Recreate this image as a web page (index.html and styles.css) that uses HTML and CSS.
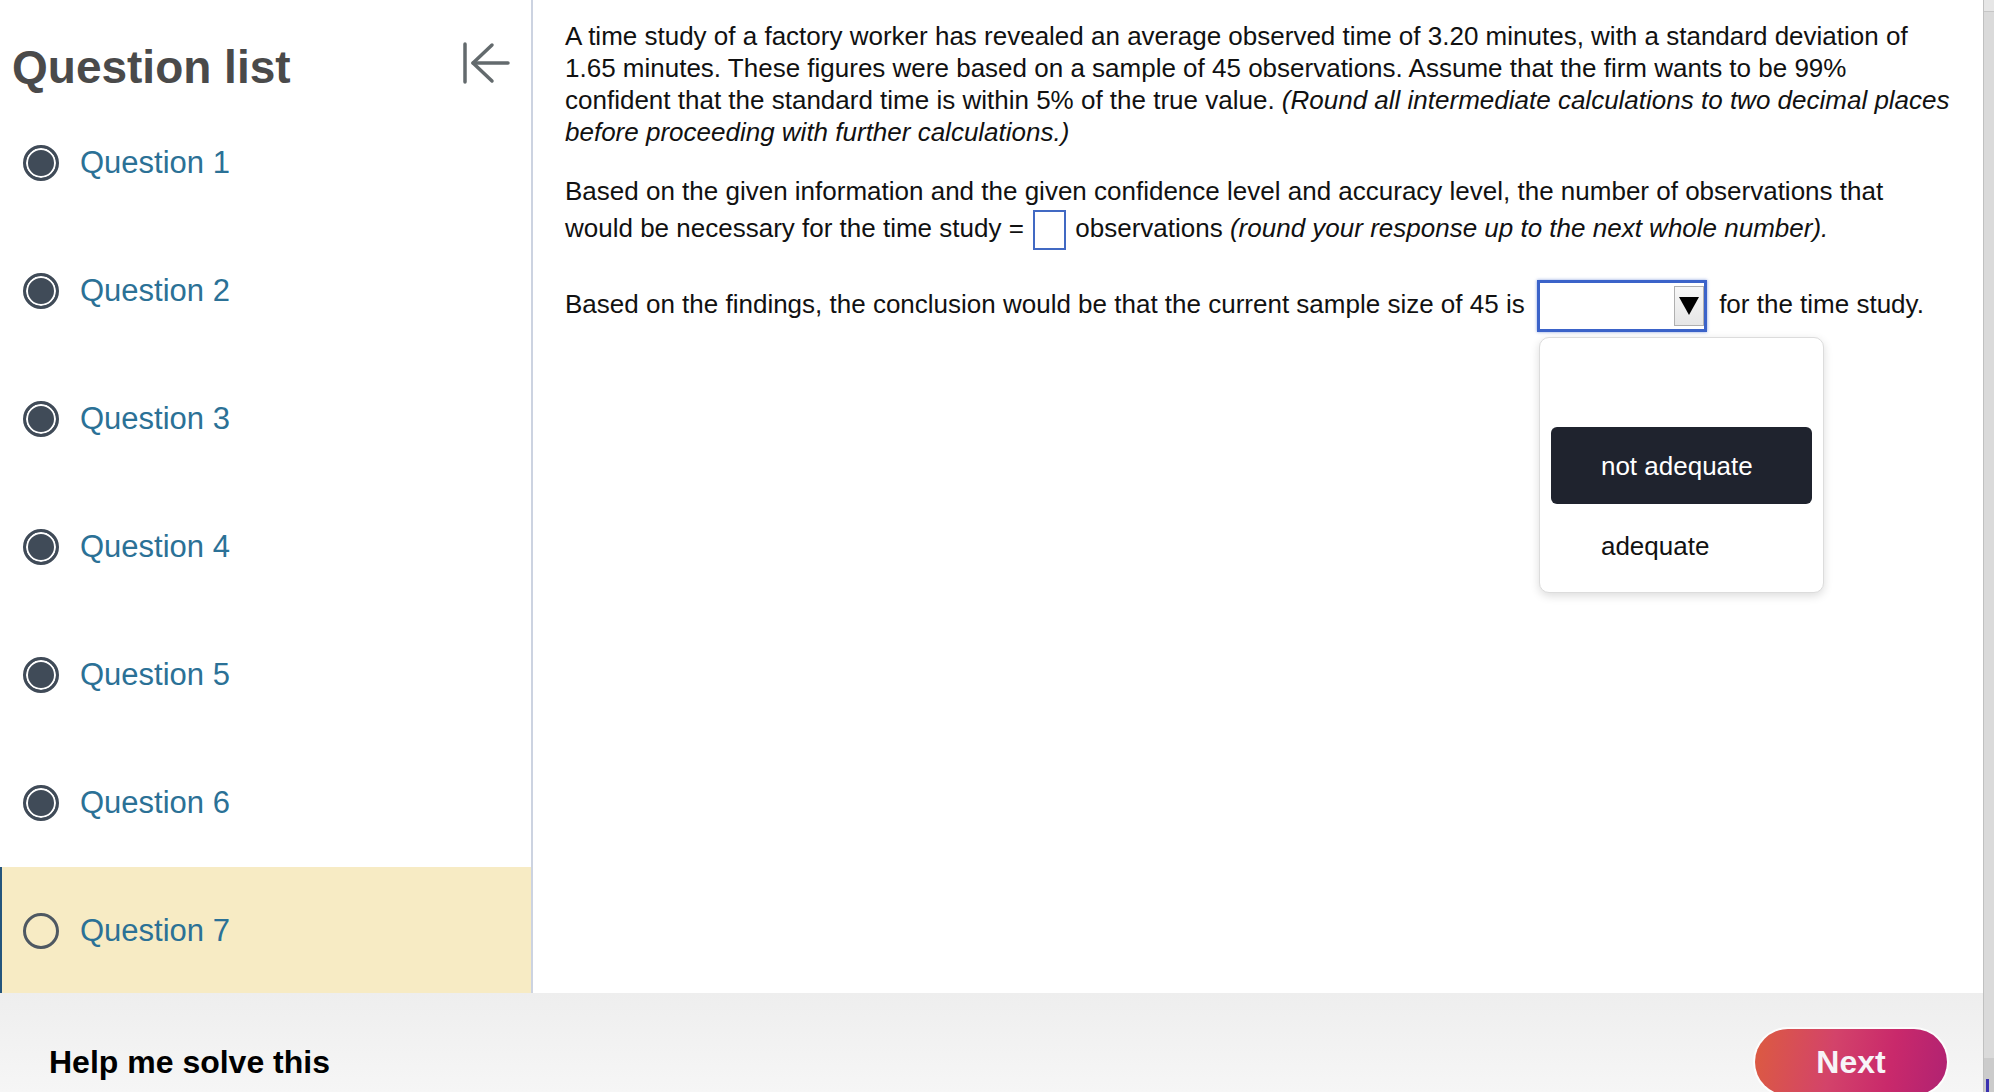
FILE: index.html
```html
<!DOCTYPE html>
<html lang="en">
<head>
<meta charset="UTF-8">
<meta name="viewport" content="width=device-width, initial-scale=1.0">
<link rel="stylesheet" href="styles.css">
<title>Question 7</title>
</head>
<body>
  <div class="page">
    <div class="app">
      <div class="workspace">
        <aside class="sidebar">
          <div class="sidebar-head">
            <h2 class="sidebar-title">Question list</h2>
            <button class="collapse-btn" aria-label="Collapse question list">
              <svg width="48" height="42" viewBox="0 0 48 42" fill="none" stroke="#636a6d" stroke-width="3.5" stroke-linecap="round" stroke-linejoin="round">
                <path d="M3 2v38"/>
                <path d="M30 3 11 21l19 18"/>
                <path d="M11 21h35"/>
              </svg>
            </button>
          </div>
          <ul class="question-list">
            <li class="question-item done"><span class="radio"></span>Question 1</li>
            <li class="question-item done"><span class="radio"></span>Question 2</li>
            <li class="question-item done"><span class="radio"></span>Question 3</li>
            <li class="question-item done"><span class="radio"></span>Question 4</li>
            <li class="question-item done"><span class="radio"></span>Question 5</li>
            <li class="question-item done"><span class="radio"></span>Question 6</li>
            <li class="question-item current"><span class="radio"></span>Question 7</li>
          </ul>
        </aside>

        <main class="question-body">
          <p>A time study of a factory worker has revealed an average observed time of 3.20 minutes, with a standard deviation of 1.65 minutes. These figures were based on a sample of 45 observations. Assume that the firm wants to be 99% confident that the standard time is within 5% of the true value. <em>(Round all intermediate calculations to two decimal places before proceeding with further calculations.)</em></p>
          <p>Based on the given information and the given confidence level and accuracy level, the number of observations that would be necessary for the time study = <input class="answer-box" type="text" aria-label="observations"> observations <em>(round your response up to the next whole number).</em></p>
          <p>Based on the findings, the conclusion would be that the current sample size of 45 is <span class="select-wrap"><span class="fake-select"><span class="select-arrow"><svg width="20" height="20" viewBox="0 0 20 20"><path d="M0 1h20L10 19z" fill="#000"/></svg></span></span><span class="select-menu" role="listbox"><span class="select-option"></span><span class="select-option active">not adequate</span><span class="select-option">adequate</span></span></span> for the time study.</p>
        </main>
      </div>

      <footer class="footer">
        <span class="help-link">Help me solve this</span>
        <button class="next-btn">Next</button>
      </footer>
    </div>

    <div class="scroll-gutter">
      <div class="gutter-top"></div>
      <div class="gutter-track"></div>
      <div class="gutter-bottom"><span class="gutter-mark"></span></div>
    </div>
  </div>
</body>
</html>
```

FILE: styles.css
```css
/* page frame */
* {
  margin: 0;
  padding: 0;
  box-sizing: border-box;
}
html,
body {
  height: 100%;
}
body {
  font-family: "Liberation Sans", Arial, sans-serif;
  background-color: #ffffff;
  overflow: hidden;
}
.page {
  display: flex;
  height: 100vh;
}
.app {
  flex: 1;
  min-width: 0;
  display: flex;
  flex-direction: column;
}
.workspace {
  flex: 1;
  min-height: 0;
  display: flex;
  overflow: hidden;
}

/* question list */
.sidebar {
  width: 533px;
  flex: none;
  border-right: 2px solid #ccd3e1;
  overflow: hidden;
}
.sidebar-head {
  height: 99px;
  display: flex;
  align-items: center;
  padding: 34px 21px 0 12px;
}
.sidebar-title {
  font-size: 46px;
  line-height: 52px;
  font-weight: bold;
  color: #4a4a4a;
}
.collapse-btn {
  display: block;
  margin-left: auto;
  margin-bottom: 7px;
  width: 48px;
  height: 42px;
  border: none;
  background: none;
}
.collapse-btn svg {
  display: block;
}
.question-list {
  list-style: none;
}
.question-item {
  height: 128px;
  display: flex;
  align-items: center;
  gap: 21px;
  padding-left: 23px;
  font-size: 31px;
  color: #2b7196;
}
.radio {
  width: 36px;
  height: 36px;
  flex: none;
  border-radius: 50%;
  border: 3px solid #404b58;
}
.question-item.done .radio {
  background-color: #404b58;
  box-shadow: inset 0 0 0 2px #ffffff;
}
.question-item.current {
  background-color: #f7ebc4;
  box-shadow: inset 2px 0 0 #24557d;
}
.question-item.current .radio {
  border-color: #4e5862;
}

/* question text */
.question-body {
  flex: 1;
  padding: 20px 29px 0 32px;
  font-size: 26px;
  line-height: 32px;
  color: #111111;
}
.question-body p {
  margin-bottom: 27px;
}
.answer-box {
  width: 33px;
  height: 40px;
  margin: 3px 2px;
  vertical-align: middle;
  border: 2px solid #4169c3;
  background-color: #ffffff;
  font: inherit;
}
.select-wrap {
  position: relative;
  display: inline-block;
  vertical-align: middle;
  margin: 0 5px;
}
.fake-select {
  width: 170px;
  height: 52px;
  display: flex;
  align-items: center;
  justify-content: flex-end;
  padding: 3px 0;
  border: 3px solid #3b63c9;
  background-color: #ffffff;
  box-shadow: 0 0 3px rgba(59, 99, 201, 0.6);
}
.select-arrow {
  width: 30px;
  height: 40px;
  display: flex;
  align-items: center;
  justify-content: center;
  border: 1px solid #b0b0b0;
  background: linear-gradient(#f7f7f7, #e6e6e6);
}
.select-arrow svg {
  display: block;
}

/* open dropdown */
.select-menu {
  position: absolute;
  top: calc(100% + 5px);
  left: 2px;
  width: 285px;
  display: flex;
  flex-direction: column;
  gap: 3px;
  padding: 9px 11px 8px;
  background-color: #ffffff;
  border: 1px solid #dcdcdc;
  border-radius: 10px;
  box-shadow: 0 3px 10px rgba(0, 0, 0, 0.14);
  z-index: 2;
}
.select-option {
  height: 77px;
  display: flex;
  align-items: center;
  padding-left: 50px;
  border-radius: 6px;
  font-size: 26px;
  color: #111111;
}
.select-option.active {
  background-color: #1f232e;
  color: #ffffff;
}

/* bottom bar */
.footer {
  height: 99px;
  flex: none;
  display: flex;
  align-items: flex-start;
  justify-content: space-between;
  padding: 36px 36px 0 49px;
  background: linear-gradient(#eeeeee, #f6f6f6);
  overflow: hidden;
}
.help-link {
  margin-top: 13px;
  font-size: 32px;
  line-height: 40px;
  font-weight: bold;
  color: #000000;
}
.next-btn {
  width: 192px;
  height: 66px;
  flex: none;
  border: none;
  border-radius: 33px;
  background: linear-gradient(100deg, #dc5b40 0%, #d3436a 40%, #c9296b 70%, #b02272 100%);
  box-shadow: 0 0 0 2px rgba(255, 255, 255, 0.8);
  color: #f7f4f8;
  font-family: "Liberation Sans", Arial, sans-serif;
  font-size: 32px;
  font-weight: bold;
}

/* window scrollbar */
.scroll-gutter {
  width: 11px;
  flex: none;
  display: flex;
  flex-direction: column;
  border-left: 1px solid #c0c0c0;
  background-color: #dadada;
}
.gutter-top {
  height: 12px;
  background-color: #e6e6e6;
  border-bottom: 1px solid #c6c6c6;
}
.gutter-track {
  flex: 1;
}
.gutter-bottom {
  height: 34px;
  display: flex;
  align-items: flex-end;
  background-color: #cbcbcb;
}
.gutter-mark {
  width: 3px;
  height: 13px;
  margin-left: 2px;
  background-color: #3a30b0;
}
```
